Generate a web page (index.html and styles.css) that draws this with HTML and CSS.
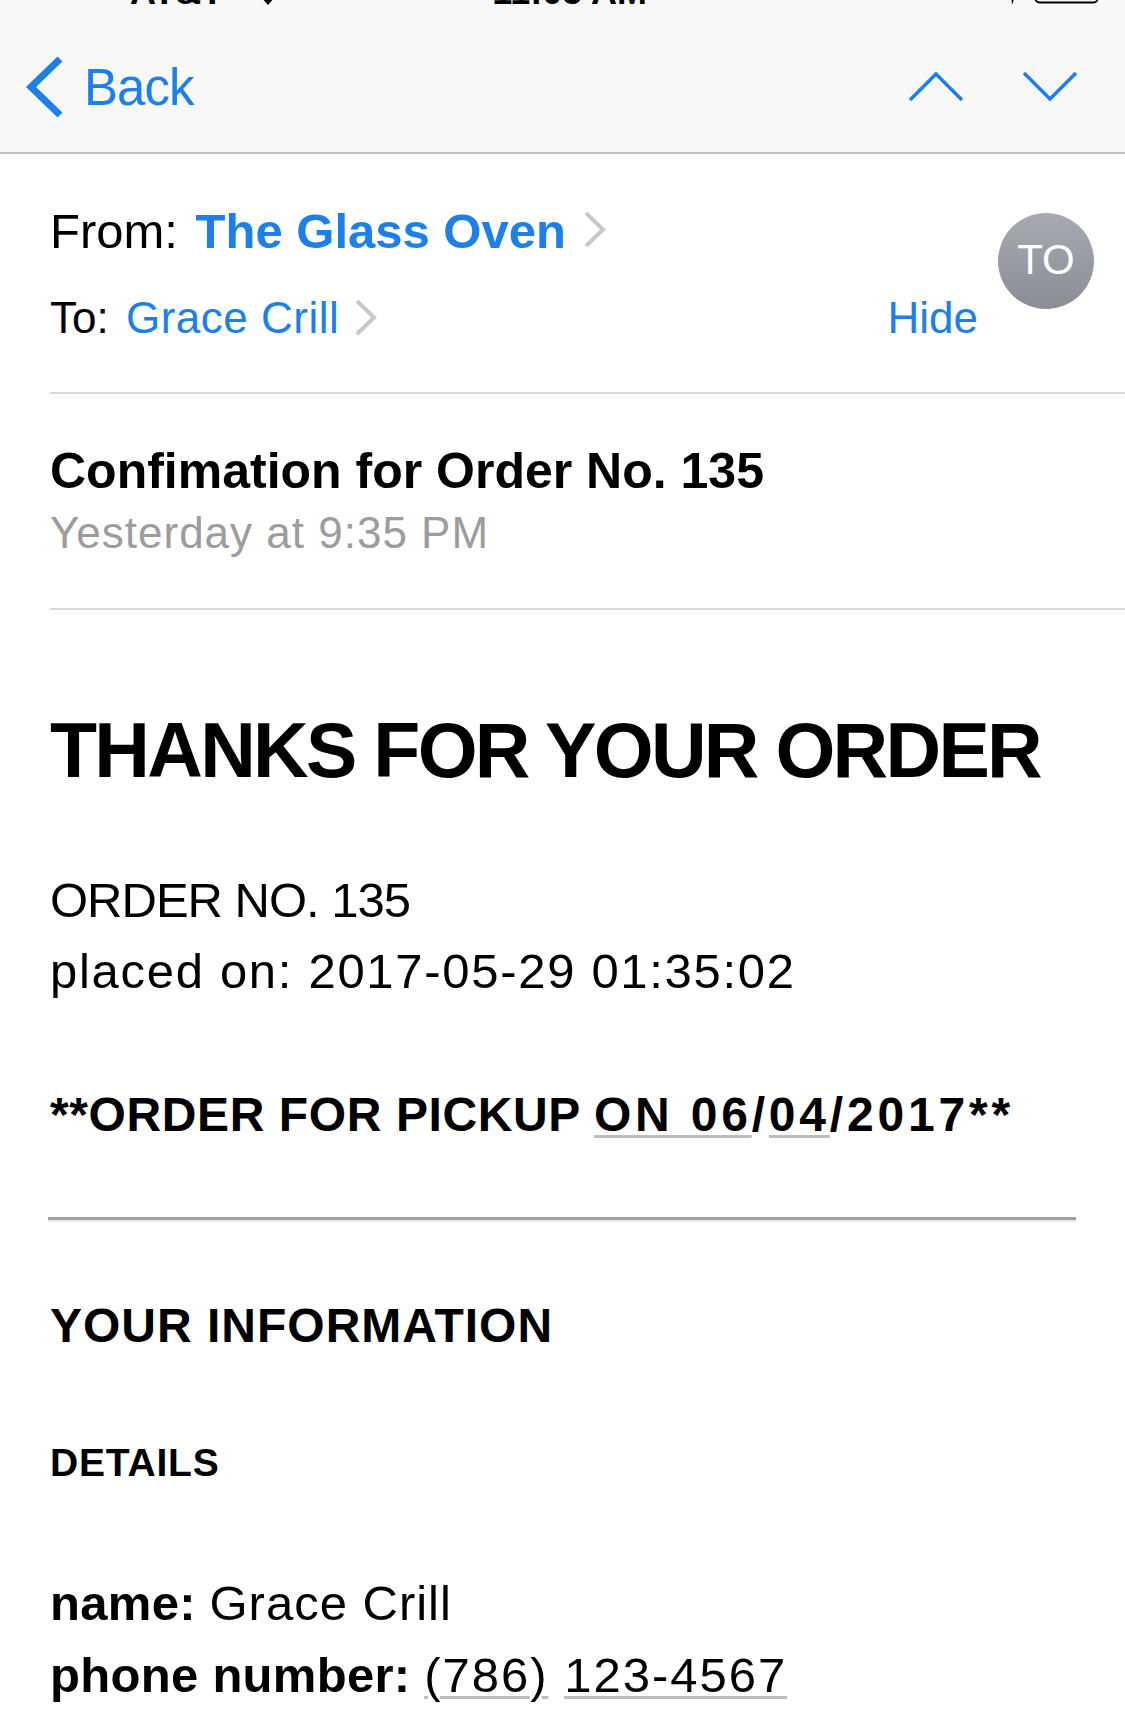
FILE: index.html
```html
<!DOCTYPE html>
<html>
<head>
<meta charset="utf-8">
<title>Mail</title>
<link rel="stylesheet" href="styles.css">
</head>
<body>
<div class="top">
  <div class="status">
    <div class="st-left">AT&amp;T <svg class="wifi" viewBox="0 0 30 24"><path d="M15 24 L2 9 A20 20 0 0 1 28 9 Z" fill="#000"/></svg></div>
    <div class="st-time">11:05 AM</div>
    <div class="st-right">
      <svg class="loc" viewBox="0 0 20 24"><path d="M18 0 L2 10 L9 11 L10 24 Z" fill="#000"/></svg>
      <svg class="batt" viewBox="0 0 68 26"><rect x="1.5" y="1.5" width="62" height="22" rx="4" fill="none" stroke="#000" stroke-width="2"/><rect x="4" y="4" width="48" height="17" fill="#000"/></svg>
    </div>
  </div>
  <div class="nav">
    <div class="back">
      <svg class="back-chev" viewBox="0 0 45 62"><polyline points="40,3 11,31 40,59" fill="none" stroke="currentColor" stroke-width="7"/></svg>
      <span>Back</span>
    </div>
    <div class="arrows">
      <svg class="arr" viewBox="0 0 56 31"><polyline points="2,29 28,3 54,29" fill="none" stroke="currentColor" stroke-width="3.5"/></svg>
      <svg class="arr" viewBox="0 0 56 31"><polyline points="2,2 28,28 54,2" fill="none" stroke="currentColor" stroke-width="3.5"/></svg>
    </div>
  </div>
</div>

<div class="hdr">
  <div class="hdr-lines">
    <div class="from">From: <span class="link strong from-name">The Glass Oven</span><svg class="chev chev-from" viewBox="0 0 25 37"><polyline points="4,2 21,18.5 4,35" fill="none" stroke="currentColor" stroke-width="4"/></svg></div>
    <div class="to">
      <div>To: <span class="link to-name">Grace Crill</span><svg class="chev chev-to" viewBox="0 0 25 37"><polyline points="4,2 21,18.5 4,35" fill="none" stroke="currentColor" stroke-width="4"/></svg></div>
      <span class="link">Hide</span>
    </div>
  </div>
  <div class="avatar">TO</div>
</div>

<div class="subj">
  <div class="subj-title">Confimation for Order No. 135</div>
  <div class="subj-date">Yesterday at 9:35 PM</div>
</div>

<main class="mail">
  <h1 class="thanks">THANKS FOR YOUR ORDER</h1>
  <div class="order">
    <div class="order-no">ORDER NO. 135</div>
    <div class="order-date">placed on: 2017-05-29 01:35:02</div>
  </div>
  <div class="pickup">**ORDER FOR PICKUP <span class="pk-date"><span class="dd">ON 06</span>/<span class="dd">04</span>/2017**</span></div>
  <hr class="rule">
  <h2 class="sec">YOUR INFORMATION</h2>
  <h3 class="sub">DETAILS</h3>
  <div class="info">
    <div class="info-line"><b>name:</b> <span class="val">Grace Crill</span></div>
    <div class="info-line"><b>phone number:</b> <span class="phone"><span class="dd">(786)</span> <span class="dd">123-4567</span></span></div>
  </div>
</main>
</body>
</html>
```

FILE: styles.css
```css
* { box-sizing: border-box; }
html, body { margin: 0; padding: 0; background: #fff; }
body {
  font-family: "Liberation Sans", Arial, sans-serif;
  color: #000;
  width: 1125px;
  overflow: hidden;
}

/* top bar */
.top {
  display: flex;
  flex-direction: column;
  background: #f8f8f8;
}
.status {
  display: grid;
  grid-template-columns: 1fr auto 1fr;
  height: 36px;
  margin-top: -26px;
  font-size: 36px;
  line-height: 36px;
  font-weight: 700;
}
.st-left { padding-left: 130px; display: flex; align-items: flex-start; gap: 30px; white-space: nowrap; }
.wifi { width: 30px; height: 24px; margin-top: 7px; }
.st-time { padding-left: 14px; }
.st-right { display: flex; justify-content: flex-end; align-items: flex-end; padding-right: 23px; gap: 12px; }
.loc { width: 20px; height: 24px; margin-bottom: 5px; }
.batt { width: 68px; height: 26px; margin-bottom: 5px; }

.nav {
  display: flex;
  justify-content: space-between;
  align-items: flex-start;
  height: 144px;
  padding: 0 47px 0 20px;
  border-bottom: 2px solid #c3c3c3;
  color: #1c7fec;
}
.back {
  display: flex;
  align-items: center;
  margin-top: 46px;
  font-size: 51px;
  line-height: 51px;
  letter-spacing: -1px;
}
.back-chev { width: 45px; height: 62px; margin-right: 19px; }
.arrows { display: flex; gap: 58px; margin-top: 61px; }
.arr { width: 56px; height: 31px; }

/* header */
.hdr {
  display: flex;
  align-items: flex-start;
  margin-left: 50px;
  padding-right: 31px;
  border-bottom: 2px solid #dadada;
}
.hdr-lines { flex: 1; padding: 47px 0 44px; }
.from { font-size: 49px; line-height: 60px; white-space: nowrap; }
.from-name { margin-left: 4px; }
.to {
  display: flex;
  justify-content: space-between;
  margin-top: 27px;
  font-size: 44px;
  line-height: 60px;
}
.to-name { margin-left: 5px; letter-spacing: 0.5px; }
.link { color: #1c7fec; }
.strong { font-weight: 700; }
.chev { color: #c7c7cc; width: 25px; height: 37px; }
.chev-from { margin-left: 16px; vertical-align: 0; }
.chev-to { margin-left: 14px; vertical-align: -3px; }
.avatar {
  flex: none;
  width: 96px;
  height: 96px;
  margin-top: 59px;
  margin-left: 20px;
  border-radius: 50%;
  background: linear-gradient(#a7aab2, #8a8d95);
  color: #fff;
  font-size: 42px;
  display: flex;
  align-items: center;
  justify-content: center;
  padding-bottom: 2px;
}

/* subject */
.subj {
  margin-left: 50px;
  padding: 47px 0 45px;
  border-bottom: 2px solid #dadada;
}
.subj-title { font-size: 50px; line-height: 60px; font-weight: 700; }
.subj-date { margin-top: 2px; font-size: 44px; line-height: 60px; color: #9c9c9c; letter-spacing: 1px; }

/* mail body */
.mail { padding: 0 49px 40px 50px; }
.thanks {
  margin: 95px 0 0;
  font-size: 77px;
  line-height: 90px;
  font-weight: 700;
  letter-spacing: -2.7px;
  white-space: nowrap;
}
.order { margin-top: 70px; font-size: 49px; line-height: 71px; }
.order-no { letter-spacing: -1px; }
.order-date { letter-spacing: 1.7px; }
.pickup {
  margin-top: 78px;
  font-size: 48px;
  line-height: 60px;
  font-weight: 700;
  letter-spacing: 0.6px;
  white-space: nowrap;
}
.pk-date { letter-spacing: 3.8px; }
.dd {
  text-decoration: underline;
  text-decoration-color: #bdbdbd;
  text-decoration-thickness: 3px;
  text-underline-offset: 4px;
}
.rule {
  margin: 72px 0 0 -2px;
  height: 0;
  border: 0;
  border-top: 3px solid #a0a0a0;
  border-bottom: 2px solid #e8e8e8;
}
.sec {
  margin: 74px 0 0;
  font-size: 48px;
  line-height: 60px;
  font-weight: 700;
  letter-spacing: 1px;
}
.sub {
  margin: 82px 0 0;
  font-size: 39px;
  line-height: 50px;
  font-weight: 700;
  letter-spacing: 0.8px;
}
.info { margin-top: 79px; font-size: 49px; line-height: 72px; }
.info b { font-weight: 700; letter-spacing: 0.3px; }
.val { letter-spacing: 1px; }
.phone { letter-spacing: 2px; }
```
